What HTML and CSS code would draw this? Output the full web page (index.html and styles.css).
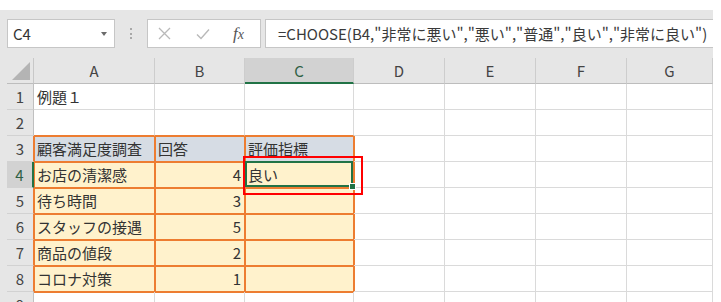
FILE: index.html
```html
<!DOCTYPE html>
<html lang="ja">

<head>
    <meta charset="UTF-8">
    <title>CHOOSE</title>
    <link rel="stylesheet" href="styles.css">
</head>

<body>
    <div class="excel">
        <!-- formula bar -->
        <div class="fbar">
            <div class="namebox"><span>C4</span><span class="dd"></span></div>
            <div class="grip"><i></i><i></i><i></i></div>
            <div class="btns">
                <svg width="13" height="13" viewBox="0 0 13 13"><path d="M1 1 L12 12 M12 1 L1 12" stroke="#b9b9b9" stroke-width="1.3" fill="none"/></svg>
                <svg width="14" height="12" viewBox="0 0 14 12"><path d="M1 6.5 L5 10.5 L13 1.5" stroke="#b9b9b9" stroke-width="1.4" fill="none"/></svg>
                <span class="fx"><i>f</i><i class="x">x</i></span>
            </div>
            <div class="formula">=CHOOSE(B4,"非常に悪い","悪い","普通","良い","非常に良い")</div>
        </div>

        <!-- sheet -->
        <div class="sheet">
            <div class="corner"><span class="tri"></span></div>
            <div class="ch">A</div>
            <div class="ch">B</div>
            <div class="ch sel">C</div>
            <div class="ch">D</div>
            <div class="ch">E</div>
            <div class="ch">F</div>
            <div class="ch">G</div>

            <div class="rh">1</div>
            <div class="c">例題１</div>
            <div class="c"></div><div class="c"></div><div class="c"></div><div class="c"></div><div class="c"></div><div class="c"></div>

            <div class="rh">2</div>
            <div class="c above"></div><div class="c above"></div><div class="c above"></div>
            <div class="c"></div><div class="c"></div><div class="c"></div><div class="c"></div>

            <div class="rh tbl">3</div>
            <div class="c th">顧客満足度調査</div>
            <div class="c th">回答</div>
            <div class="c th">評価指標</div>
            <div class="c ol"></div><div class="c"></div><div class="c"></div><div class="c"></div>

            <div class="rh tbl cur">4</div>
            <div class="c td">お店の清潔感</div>
            <div class="c td num">4</div>
            <div class="c td active">良い<span class="mark"></span></div>
            <div class="c ol"></div><div class="c"></div><div class="c"></div><div class="c"></div>

            <div class="rh tbl">5</div>
            <div class="c td">待ち時間</div>
            <div class="c td num">3</div>
            <div class="c td"></div>
            <div class="c ol"></div><div class="c"></div><div class="c"></div><div class="c"></div>

            <div class="rh tbl">6</div>
            <div class="c td">スタッフの接遇</div>
            <div class="c td num">5</div>
            <div class="c td"></div>
            <div class="c ol"></div><div class="c"></div><div class="c"></div><div class="c"></div>

            <div class="rh tbl">7</div>
            <div class="c td">商品の値段</div>
            <div class="c td num">2</div>
            <div class="c td"></div>
            <div class="c ol"></div><div class="c"></div><div class="c"></div><div class="c"></div>

            <div class="rh tbl">8</div>
            <div class="c td">コロナ対策</div>
            <div class="c td num">1</div>
            <div class="c td"></div>
            <div class="c ol"></div><div class="c"></div><div class="c"></div><div class="c"></div>

            <div class="rh">9</div>
            <div class="c ot"></div><div class="c ot"></div><div class="c ot"></div>
            <div class="c"></div><div class="c"></div><div class="c"></div><div class="c"></div>
        </div>
    </div>
</body>

</html>
```
FILE: styles.css
```css
body {
    margin: 0;
    padding: 0;
    background-color: white;
    font-family: "Noto Sans CJK JP", "Noto Sans", sans-serif;
}

.excel {
    margin-top: 10px;
    width: 713px;
    height: 292px;
    background-color: #e6e6e6;
    overflow: hidden;
}

/* formula bar */
.fbar {
    display: flex;
    height: 29px;
    margin-top: 9px;
    padding-left: 7px;
}

.namebox {
    width: 108px;
    box-sizing: border-box;
    display: flex;
    align-items: center;
    justify-content: space-between;
    padding: 0 7px 0 5px;
    background-color: white;
    border: 1px solid #c6c6c6;
    font-size: 15px;
    color: #333;
}

.dd {
    width: 0;
    height: 0;
    border-left: 3.5px solid transparent;
    border-right: 3.5px solid transparent;
    border-top: 4px solid #6b6b6b;
}

.grip {
    width: 32px;
    display: flex;
    flex-direction: column;
    align-items: center;
    justify-content: center;
    gap: 2.5px;
}

.grip i {
    width: 2px;
    height: 2px;
    background-color: #a8a8a8;
}

.btns {
    width: 114px;
    box-sizing: border-box;
    display: flex;
    align-items: center;
    padding-left: 10px;
    background-color: white;
    border: 1px solid #c6c6c6;
}

.btns svg:nth-child(2) {
    margin-left: 25px;
}

.fx {
    margin-left: 23px;
    font-family: "Liberation Serif", serif;
    font-style: italic;
    color: #555;
    font-size: 17px;
}

.fx i.x {
    font-size: 14px;
}

.formula {
    flex: 1;
    margin-left: 4px;
    box-sizing: border-box;
    background-color: white;
    border: 1px solid #c6c6c6;
    border-right: none;
    padding-left: 12px;
    font-size: 15px;
    line-height: 27px;
    color: #3a3a3a;
    white-space: nowrap;
    overflow: hidden;
}

/* sheet */
.sheet {
    display: grid;
    grid-template-columns: 27px 121px 90px 109px 91px 91px 91px 86px;
    grid-template-rows: 26px;
    grid-auto-rows: 26px;
    margin-top: 10px;
    margin-left: 7px;
    font-size: 15px;
}

.sheet > div {
    box-sizing: border-box;
    white-space: nowrap;
}

.corner {
    background-color: #e6e6e6;
    border-right: 1px solid #c8c8c8;
    border-bottom: 1px solid #bdbdbd;
    position: relative;
}

.tri {
    position: absolute;
    right: 3px;
    bottom: 3px;
    width: 0;
    height: 0;
    border-left: 18px solid transparent;
    border-bottom: 18px solid #b4b4b4;
}

.ch {
    background-color: #e6e6e6;
    border-right: 1px solid #cdcdcd;
    border-bottom: 1px solid #bdbdbd;
    text-align: center;
    line-height: 25px;
    color: #444;
}

.ch.sel {
    background-color: #d2d2d2;
    border-bottom: 2px solid #217346;
    color: #2f5f45;
}

.rh {
    background-color: #e6e6e6;
    border-right: 1px solid #c0c0c0;
    border-bottom: 1px solid #d2d2d2;
    text-align: center;
    line-height: 25px;
    color: #444;
}

.rh.tbl {
    border-right-color: #ed7d31;
}

.rh.cur {
    background-color: #d2d2d2;
    border-right: 2px solid #217346;
    color: #2f5f45;
}

.c {
    background-color: white;
    border-right: 1px solid #dadada;
    border-bottom: 1px solid #dadada;
    line-height: 25px;
    padding-left: 3px;
    color: #333;
}

.c.above {
    border-bottom-color: #ed7d31;
}

.c.th,
.c.td {
    border-right-color: #ed7d31;
    border-bottom-color: #ed7d31;
    box-shadow: inset 1px 1px 0 #ed7d31;
}

.c.th {
    background-color: #d6dce4;
}

.c.td {
    background-color: #fff2cc;
}

.c.num {
    text-align: right;
    padding-right: 3px;
}

.c.ol {
    box-shadow: inset 1px 0 0 #ed7d31;
}

.c.ot {
    box-shadow: inset 0 1px 0 #ed7d31;
}

/* active cell + annotation */
.c.active {
    position: relative;
}

.c.active::after {
    content: "";
    position: absolute;
    left: 0;
    top: -1px;
    right: 0;
    bottom: 0;
    border: 2px solid #217346;
}

.c.active::before {
    content: "";
    position: absolute;
    right: -3px;
    bottom: -3px;
    width: 5px;
    height: 5px;
    background-color: #217346;
    border: 1px solid white;
    z-index: 2;
}

.mark {
    position: absolute;
    left: -2px;
    top: -6px;
    width: 120px;
    height: 39px;
    box-sizing: border-box;
    border: 2px solid #ff0000;
    z-index: 3;
}
```
